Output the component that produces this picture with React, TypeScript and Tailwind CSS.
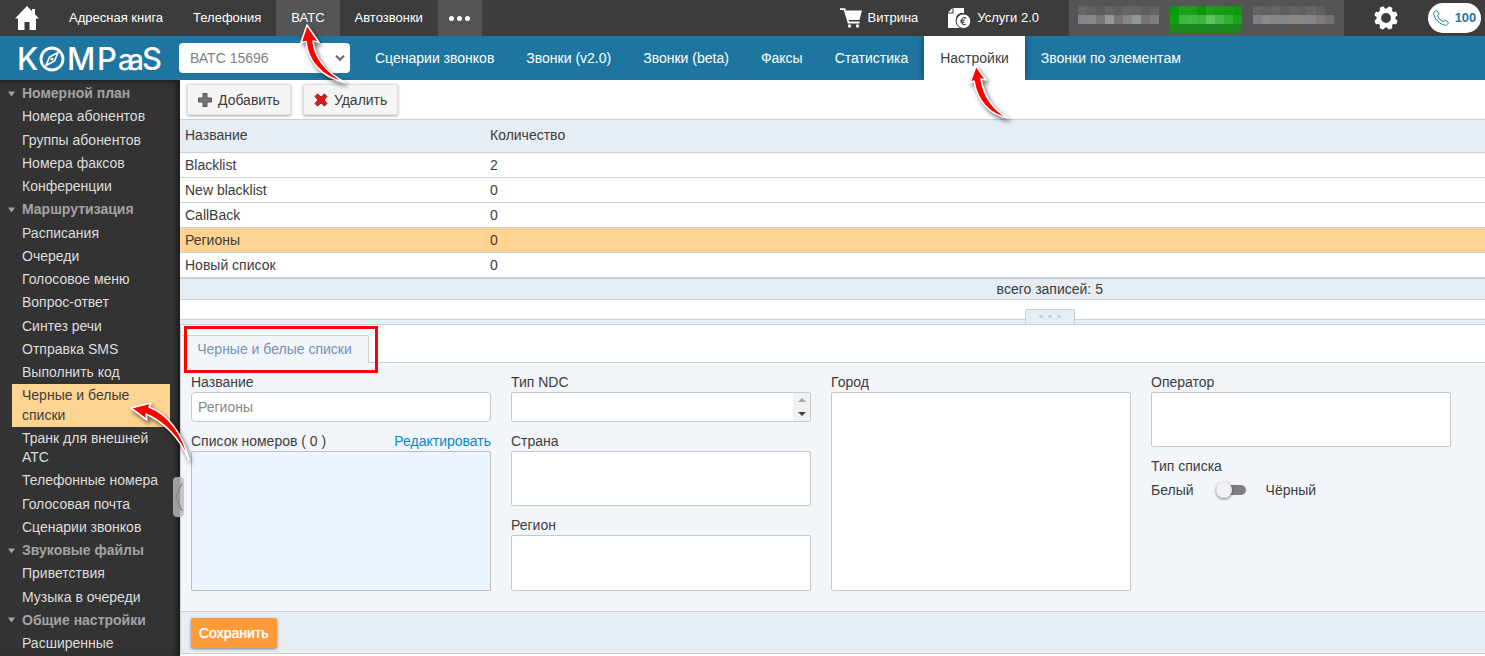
import React, { useState } from 'react';

const MENU = [
  {
    title: 'Номерной план',
    items: ['Номера абонентов', 'Группы абонентов', 'Номера факсов', 'Конференции'],
  },
  {
    title: 'Маршрутизация',
    items: [
      'Расписания',
      'Очереди',
      'Голосовое меню',
      'Вопрос-ответ',
      'Синтез речи',
      'Отправка SMS',
      'Выполнить код',
      'Черные и белые списки',
      'Транк для внешней АТС',
      'Телефонные номера',
      'Голосовая почта',
      'Сценарии звонков',
    ],
  },
  { title: 'Звуковые файлы', items: ['Приветствия', 'Музыка в очереди'] },
  { title: 'Общие настройки', items: ['Расширенные'] },
];

const TABS = [
  'Сценарии звонков',
  'Звонки (v2.0)',
  'Звонки (beta)',
  'Факсы',
  'Статистика',
  'Настройки',
  'Звонки по элементам',
];

const LISTS = [
  { name: 'Blacklist', count: 2 },
  { name: 'New blacklist', count: 0 },
  { name: 'CallBack', count: 0 },
  { name: 'Регионы', count: 0 },
  { name: 'Новый список', count: 0 },
];

// Hidden account data, one colour per mosaic cell
const MOSAIC_LEFT = [
  ['#666', '#606060', '#5b5b5b', '#646464', '#5f5f5f', '#666', '#656565', '#5e5e5e', '#636363'],
  ['#858589', '#868686', '#77777b', '#979793', '#777377', '#868686', '#929797', '#777478', '#807f7c'],
];
const MOSAIC_GREEN = [
  ['#069a06', '#1f9f1f', '#1c9f1c', '#0a950a', '#209e20', '#189a18', '#149a14', '#109810'],
  ['#08a508', '#3fb63f', '#42b742', '#3cb33c', '#60c45c', '#48b648', '#32b02e', '#1ca41c'],
  ['#1d851d', '#1d851d', '#1d851d', '#1d851d', '#1d851d', '#1d851d', '#1d851d', '#1d851d'],
];
const MOSAIC_RIGHT = [
  ['#646464', '#606062', '#656565', '#5e5e5e', '#636363', '#606060', '#666', '#5f5f5f', '#555'],
  ['#828087', '#878b8b', '#858585', '#82858b', '#8b8882', '#868686', '#858589', '#827a77', '#727272'],
];

const Mosaic: React.FC<{ rows: string[][] }> = ({ rows }) => (
  <div aria-hidden="true">
    {rows.map((row, r) => (
      <div key={r} className="flex">
        {row.map((color, c) => (
          <div key={c} className="h-[9px] w-[9px]" style={{ backgroundColor: color }}></div>
        ))}
      </div>
    ))}
  </div>
);

const Arrow: React.FC<{ d: string; className: string }> = ({ d, className }) => (
  <svg
    viewBox="0 0 70 70"
    aria-hidden="true"
    className={`pointer-events-none absolute z-20 h-[70px] w-[70px] overflow-visible drop-shadow-[2px_3px_2px_rgba(0,0,0,0.55)] ${className}`}
  >
    <path d={d} fill="#f00" stroke="#fff" strokeWidth="1.6" strokeLinejoin="round" />
  </svg>
);

const Logo: React.FC = () => (
  <svg viewBox="-4 0 152 44" role="img" aria-label="KOMPaaS" className="h-11 w-[152px] shrink-0">
    <g fill="#fff" fontFamily="Inter, sans-serif" fontSize="31" fontWeight="500">
      <text x="-2" y="34">K</text>
      <text x="48" y="34">M</text>
      <text x="78" y="34">P</text>
      <text x="99 109" y="34" fontSize="28">aa</text>
      <text x="123" y="34">S</text>
    </g>
    <circle cx="33" cy="23" r="11" fill="none" stroke="#fff" strokeWidth="2.8" />
    <path d="M39 16.500 35.500 25 27 29.500 30.500 21Z" fill="none" stroke="#fff" strokeWidth="1.600" />
    <circle cx="33" cy="23" r="1.600" fill="#fff" />
  </svg>
);

const HomeIcon = () => (
  <svg viewBox="0 0 24 24" className="h-6 w-6" fill="#fff" aria-hidden="true">
    <path d="M12 0 0 12.500h3V24h6.500v-8h5v8H21V12.500h3l-4-4.200V3h-3v2.200Z" />
  </svg>
);

const CartIcon = () => (
  <svg viewBox="0 0 22 20" className="h-5 w-[22px]" aria-hidden="true">
    <path d="M0 1.200h4.500l4 13.300h11" fill="none" stroke="#fff" strokeWidth="1.800" />
    <path d="M5.500 2.500H22l-2.500 9.500H8.500Z" fill="#fff" />
    <circle cx="9.500" cy="18" r="1.700" fill="#fff" />
    <circle cx="17.500" cy="18" r="1.700" fill="#fff" />
  </svg>
);

const ServicesIcon = () => (
  <svg viewBox="0 0 23 21" className="h-[21px] w-[23px]" aria-hidden="true">
    <path d="M5.500 0H16v5h-3C9 6 7.500 9 8 12.500c0 3 2 5.500 4 7.500H0V5.500h5.500Z" fill="#fff" />
    <path d="M0 4.500 4.500 0v4.500Z" fill="#fff" />
    <circle cx="15.500" cy="13.200" r="7.300" fill="#fff" stroke="#3c3c3c" />
    <path
      d="M18.200 10.300c-2.600-1.700-4.700.2-4.700 2.900s2.100 4.600 4.700 2.900M12.300 12.300h4.500M12.300 14.100h4"
      fill="none"
      stroke="#3c3c3c"
      strokeWidth="1.100"
    />
  </svg>
);

const GearIcon = () => (
  <svg viewBox="0 0 24 24" className="h-6 w-6" aria-hidden="true">
    <circle cx="12" cy="12" r="7.200" fill="none" stroke="#fff" strokeWidth="4.600" />
    {[22.5, 67.5, 112.5, 157.5, 202.5, 247.5, 292.5, 337.5].map((angle) => (
      <path
        key={angle}
        d="M8.800 4.500 9.800.9c.1-.5.4-.7.9-.7h2.600c.5 0 .8.2.9.7l1 3.600Z"
        transform={`rotate(${angle} 12 12)`}
        fill="#fff"
      />
    ))}
  </svg>
);

const PhoneIcon = () => (
  <svg viewBox="0 0 16 16" className="h-4 w-4" fill="none" stroke="#1f76a0" strokeLinejoin="round" aria-hidden="true">
    <path d="M1.500 1.700 3 .6c.6-.3 1 0 1.300.4l1.600 2.500c.3.500.1 1-.3 1.300l-1 .7c.6 2.500 3 5 5.700 6l.8-1c.4-.5.900-.5 1.300-.2l2.500 1.500c.5.400.6.900.3 1.400l-1.100 1.500c-.5.700-1.400.7-2.300.5C6.500 14 1.700 9 .7 4.200c-.2-1 0-1.900.8-2.500Z" />
    <path d="m3.800 6.200 1-.8M10 12.200l.7-1" />
  </svg>
);

const Label: React.FC<{ htmlFor: string; children: React.ReactNode }> = ({ htmlFor, children }) => (
  <label htmlFor={htmlFor} className="block h-5 leading-5">
    {children}
  </label>
);

const boxClass = 'block w-full resize-none rounded-xs border border-[#c6c8ca] bg-white outline-none';

const TopBar: React.FC = () => (
  <header className="flex h-9 items-stretch bg-[#3c3c3c] text-[13px] text-white">
    <a href="#home" aria-label="Главная" className="flex w-[54px] items-center justify-center">
      <HomeIcon />
    </a>
    <a href="#book" className="flex items-center px-[15px]">Адресная книга</a>
    <a href="#phone" className="flex items-center px-[15px]">Телефония</a>
    <a href="#vats" className="relative flex items-center bg-[#555] px-[15px]">
      ВАТС
      <Arrow
        className="top-5 left-3.5"
        d="M17 5 11 22.500l5-1C18 40 30 57 55 62.500C40 54 25 42 23 21l6 1.500Z"
      />
    </a>
    <a href="#auto" className="flex items-center px-[15px]">Автозвонки</a>
    <button type="button" aria-label="Ещё" className="flex w-11 items-center justify-center gap-[3px] bg-[#555]">
      <span className="h-[5px] w-[5px] rounded-full bg-white"></span>
      <span className="h-[5px] w-[5px] rounded-full bg-white"></span>
      <span className="h-[5px] w-[5px] rounded-full bg-white"></span>
    </button>
    <div className="ml-auto flex items-stretch">
      <a href="#shop" className="flex items-center gap-1.5 px-[15px]">
        <CartIcon />
        Витрина
      </a>
      <a href="#services" className="flex items-center gap-1.5 pr-[30px] pl-[15px]">
        <ServicesIcon />
        Услуги 2.0
      </a>
      <div className="flex w-[275px] items-start gap-[11px] bg-[#555] pt-1.5 pl-[9px]">
        <Mosaic rows={MOSAIC_LEFT} />
        <Mosaic rows={MOSAIC_GREEN} />
        <Mosaic rows={MOSAIC_RIGHT} />
      </div>
      <button type="button" aria-label="Настройки профиля" className="flex w-[84px] items-center justify-center">
        <GearIcon />
      </button>
      <button
        type="button"
        className="mr-1 flex h-[30px] w-[53px] items-center justify-center gap-1.5 self-center rounded-full bg-white text-[13px] font-bold text-[#1f76a0]"
      >
        <PhoneIcon />
        100
      </button>
    </div>
  </header>
);

const TabBar: React.FC = () => (
  <div className="flex h-11 items-stretch bg-[#1e76a0] text-sm text-white">
    <div className="flex w-[179px] items-center pl-[15px]">
      <Logo />
    </div>
    <div className="relative mr-[9px] flex items-center">
      <select
        aria-label="ВАТС"
        className="h-[30px] w-[171px] appearance-none rounded-sm bg-white pl-[11px] text-sm text-[#808080] outline-none"
      >
        <option>ВАТС 15696</option>
      </select>
      <svg viewBox="0 0 10 6" className="pointer-events-none absolute right-[5px] h-1.5 w-2.5" fill="none" stroke="#666" strokeWidth="2" aria-hidden="true">
        <path d="m1 .8 4 4 4-4" />
      </svg>
    </div>
    <nav className="flex items-stretch">
      {TABS.map((tab) =>
        tab === 'Настройки' ? (
          <a
            key={tab}
            href="#settings"
            className="relative flex items-center bg-white px-4 text-[#3c3c3c] shadow-[0_0_8px_rgba(0,0,0,0.45)] [clip-path:inset(0_-8px_-50px_-8px)]"
          >
            {tab}
            <Arrow
              className="top-6 left-10"
              d="M12 6 6 23l4-2C13 40 25 55 44 58C30 50 20 37 17 19l5 1Z"
            />
            {/* hides the shadow under the open tab */}
            <span className="absolute inset-x-[-8px] top-full h-3 bg-white"></span>
          </a>
        ) : (
          <a key={tab} href="#tab" className="flex items-center px-4">
            {tab}
          </a>
        )
      )}
    </nav>
  </div>
);

const Sidebar: React.FC = () => (
  <aside className="relative w-[180px] shrink-0 bg-[#333] pt-0.5 text-sm leading-snug text-[#ddd] shadow-[inset_-4px_2px_4px_rgba(0,0,0,0.4)]">
    {MENU.map((group) => (
      <section key={group.title}>
        <h2 className="flex items-center py-0.5 font-bold text-[#a3a3a3]">
          <svg viewBox="0 0 22 6" className="h-1.5 w-[22px]" fill="#a3a3a3" aria-hidden="true">
            <path d="M8 .5h7L11.500 5.500Z" />
          </svg>
          {group.title}
        </h2>
        <ul>
          {group.items.map((item) =>
            item === 'Черные и белые списки' ? (
              <li key={item} className="relative mr-2.5 ml-3 bg-[#ffd392] text-[#3c3c3c]">
                <a href="#lists" className="block py-0.5 pr-5 pl-2.5">{item}</a>
                <Arrow
                  className="top-3.5 left-[108px]"
                  d="M11 10 31 5l-2 4C48 16 63 36 69 62C60 40 44 24 26 16l1 6Z"
                />
              </li>
            ) : (
              <li key={item} className="mr-2.5 ml-3">
                <a href="#item" className="block py-0.5 pl-2.5">{item}</a>
              </li>
            )
          )}
        </ul>
      </section>
    ))}
    <button
      type="button"
      aria-label="Свернуть меню"
      className="absolute top-[397px] -right-1 z-10 flex h-10 w-[11px] items-center justify-center rounded-sm bg-[#bbb]/80"
    >
      <svg viewBox="0 0 8 28" className="h-7 w-2" fill="none" stroke="#888" strokeWidth="1.500" aria-hidden="true">
        <path d="M7 0 1 14l6 14" />
      </svg>
    </button>
  </aside>
);

const ListsTable: React.FC = () => (
  <table className="w-full border-collapse text-left">
    <thead>
      <tr className="h-8 border-b border-[#c8d0d5] bg-[#e6edf3]">
        <th className="w-[305px] pb-0.5 pl-[5px] font-normal">Название</th>
        <th className="pb-0.5 pl-[5px] font-normal">Количество</th>
      </tr>
    </thead>
    <tbody>
      {LISTS.map((row) => (
        <tr
          key={row.name}
          className={`h-[25px] border-b border-[#c8d0d5] ${row.name === 'Регионы' ? 'bg-[#ffd392]' : 'bg-white'}`}
        >
          <td className="pl-[5px]">{row.name}</td>
          <td className="pl-[5px]">{row.count}</td>
        </tr>
      ))}
    </tbody>
  </table>
);

const ListForm: React.FC = () => {
  const [name, setName] = useState('Регионы');
  const [black, setBlack] = useState(false);

  return (
    <form className="flex grow flex-col border-l border-[#c8d0d5]" onSubmit={(e) => e.preventDefault()}>
      {/* Tabs */}
      <div className="flex h-[38px] items-end border-b border-[#c8d0d5] bg-white">
        <div className="relative">
          <button
            type="button"
            className="-mb-px block h-7 w-[188px] rounded-t-xs border border-b-0 border-l-0 border-[#c8d0d5] bg-[#f2f6fa] text-[#7590b5]"
          >
            Черные и белые списки
          </button>
          <div className="pointer-events-none absolute -top-[9px] left-[3px] h-[47px] w-[194px] border-3 border-[#f00]"></div>
        </div>
      </div>

      {/* Fields */}
      <div className="flex grow gap-5 bg-[#f2f6fa] px-2.5 pt-[9px] pb-5">
        <div className="w-[300px]">
          <Label htmlFor="name">Название</Label>
          <input
            id="name"
            value={name}
            onChange={(e) => setName(e.target.value)}
            className="mb-[9px] block h-[30px] w-full rounded-sm border border-[#c6c8ca] bg-white px-1.5 text-[#888] outline-none"
          />
          <div className="flex justify-between">
            <Label htmlFor="numbers">Список номеров ( 0 )</Label>
            <a href="#edit" className="leading-5 text-[#0d86ca]">Редактировать</a>
          </div>
          <textarea id="numbers" readOnly className="block h-[140px] w-full resize-none rounded-xs border border-[#bbbec2] bg-[#ecf4fd] outline-none"></textarea>
        </div>

        <div className="flex w-[300px] flex-col">
          <Label htmlFor="ndc">Тип NDC</Label>
          <div className="mb-[9px] flex h-[30px] rounded-xs border border-[#c6c8ca] bg-white">
            <input id="ndc" className="min-w-0 grow px-1.5 outline-none" />
            <div className="flex w-[17px] flex-col bg-[#f1f1f1]">
              <button type="button" aria-label="Вверх" className="flex grow items-center justify-center">
                <svg viewBox="0 0 8 4" className="h-1 w-2" fill="#a3a3a3" aria-hidden="true"><path d="M0 4 4 0l4 4Z" /></svg>
              </button>
              <button type="button" aria-label="Вниз" className="flex grow items-center justify-center">
                <svg viewBox="0 0 8 4" className="h-1 w-2" fill="#444" aria-hidden="true"><path d="M0 0h8L4 4Z" /></svg>
              </button>
            </div>
          </div>
          <Label htmlFor="country">Страна</Label>
          <textarea id="country" className={`${boxClass} mb-[9px] h-[55px] grow`}></textarea>
          <Label htmlFor="region">Регион</Label>
          <textarea id="region" className={`${boxClass} h-[55px] grow`}></textarea>
        </div>

        <div className="flex w-[300px] flex-col">
          <Label htmlFor="city">Город</Label>
          <textarea id="city" className={`${boxClass} grow`}></textarea>
        </div>

        <div className="w-[300px]">
          <Label htmlFor="operator">Оператор</Label>
          <textarea id="operator" className={`${boxClass} mb-[9px] h-[55px]`}></textarea>
          <div className="leading-5">Тип списка</div>
          <label className="mt-1 flex items-center leading-5">
            <span>Белый</span>
            <input
              type="checkbox"
              aria-label="Чёрный список"
              checked={black}
              onChange={(e) => setBlack(e.target.checked)}
              className="mr-5 ml-[22px] h-2.5 w-[30px] appearance-none rounded-full bg-[#808080] before:-mt-[3px] before:block before:h-4 before:w-4 before:rounded-full before:bg-[#f1f1f1] before:shadow-[0_1px_3px_rgba(0,0,0,0.5)] checked:before:ml-3.5"
            />
            <span>Чёрный</span>
          </label>
        </div>
      </div>

      <div className="flex h-[43px] items-center border-y border-[#c8d0d5] bg-[#e6edf3] px-2.5">
        <button
          type="submit"
          className="h-[30px] rounded-xs bg-[#ff9a38] px-2 text-white shadow-[0_1px_3px_rgba(0,0,0,0.45)] [text-shadow:0_0_1px_#fff]"
        >
          Сохранить
        </button>
      </div>
    </form>
  );
};

const App: React.FC = () => {
  return (
    <div className="flex min-h-screen flex-col overflow-x-hidden bg-white font-['Liberation_Sans',Arial,sans-serif]">
      <TopBar />
      <TabBar />
      <div className="flex grow">
        <Sidebar />
        <main className="flex min-w-0 grow flex-col pb-0.5 text-sm text-[#3c3c3c]">
          {/* Toolbar */}
          <div className="flex h-10 items-center gap-3 border-b border-[#c8d0d5] px-[7px]">
            <button
              type="button"
              className="flex h-[31px] items-center gap-1.5 rounded-xs border border-[#e0e0e0] bg-[#f5f5f5] px-2.5 shadow-[0_1px_3px_rgba(0,0,0,0.35)]"
            >
              <svg viewBox="0 0 14 14" className="h-3.5 w-3.5" fill="#777" stroke="#555" aria-hidden="true">
                <path d="M5 .5h4V5h4.500v4H9v4.500H5V9H.5V5H5Z" />
              </svg>
              Добавить
            </button>
            <button
              type="button"
              className="flex h-[31px] items-center gap-1.5 rounded-xs border border-[#e0e0e0] bg-[#f5f5f5] px-2.5 shadow-[0_1px_3px_rgba(0,0,0,0.35)]"
            >
              <svg viewBox="0 0 14 14" className="h-3.5 w-3.5" fill="#d42020" stroke="#a81414" aria-hidden="true">
                <path d="M1 3.500 3.500 1 7 4l3.500-3L13 3.500 10 7l3 3.500-2.500 2.500L7 10l-3.500 3L1 10.500 4 7Z" />
              </svg>
              Удалить
            </button>
          </div>

          <ListsTable />

          <div className="h-[22px] border-t border-b border-[#c8d0d5] bg-[#e6edf3] pl-[33.3%] text-center leading-5">
            всего записей: 5
          </div>

          {/* Splitter */}
          <div className="flex h-[19px] items-end justify-center pl-[33.3%]">
            <div className="z-10 -mb-[5px] flex h-[15px] w-[50px] shrink-0 items-center justify-center gap-[5px] rounded-t-xs border border-b-0 border-[#c8d0d5] bg-[#e6edf3]">
              <span className="h-[3px] w-1 rounded-full bg-[#c8d0d5]"></span>
              <span className="h-[3px] w-1 rounded-full bg-[#c8d0d5]"></span>
              <span className="h-[3px] w-1 rounded-full bg-[#c8d0d5]"></span>
            </div>
          </div>
          <div className="h-1.5 border-y border-[#c8d0d5] bg-[#e6edf3]"></div>

          <ListForm />
        </main>
      </div>
    </div>
  );
};

export default App;
